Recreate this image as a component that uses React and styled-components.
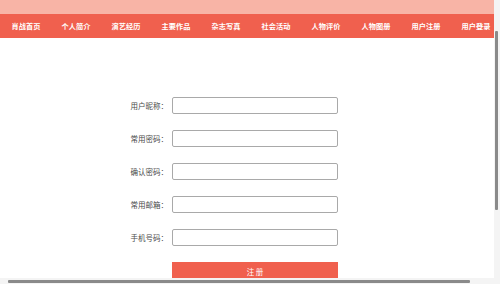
import React from "react";
import styled, { createGlobalStyle } from "styled-components";

const GlobalStyle = createGlobalStyle`
  html, body {
    margin: 0;
    padding: 0;
    background: #ffffff;
    overflow: hidden;
  }
  body {
    font-family: "Noto Sans CJK SC", "Noto Sans", sans-serif;
  }
`;

const navItems = [
  "肖战首页",
  "个人简介",
  "演艺经历",
  "主要作品",
  "杂志写真",
  "社会活动",
  "人物评价",
  "人物图册",
  "用户注册",
  "用户登录",
];

const fields = ["用户昵称", "常用密码", "确认密码", "常用邮箱", "手机号码"];

// Page

const Page = styled.div`
  width: 500px;
  height: 284px;
  position: relative;
  overflow: hidden;
`;

const TopBand = styled.div`
  height: 14px;
  background: #f8b4a6;
`;

// Nav

const Nav = styled.nav`
  display: flex;
  height: 24px;
  background: #f0604e;
`;

const NavItem = styled.a`
  box-sizing: border-box;
  flex: 0 0 50px;
  min-width: 0;
  display: flex;
  align-items: center;
  justify-content: center;
  padding-left: 2px;
  color: #ffffff;
  font-size: 7.2px;
  font-weight: 700;
  white-space: nowrap;
  text-decoration: none;
`;

// Form

const Form = styled.form`
  display: grid;
  grid-template-columns: 168px 166px;
  column-gap: 4px;
  row-gap: 16px;
  padding: 59px 0 0 0;
  align-items: center;
`;

const Label = styled.label`
  text-align: right;
  font-size: 7.5px;
  color: #4a4a4a;
`;

const Input = styled.input`
  box-sizing: border-box;
  height: 17px;
  width: 166px;
  margin: 0;
  border: 1px solid #a9a9a9;
  border-radius: 2px;
  background: #ffffff;
  outline: none;
`;

const Submit = styled.button`
  grid-column: 2;
  height: 18px;
  width: 166px;
  border: none;
  background: #f0604e;
  color: #ffffff;
  font-family: inherit;
  font-size: 7.5px;
  padding: 0;
`;

// Scrollbars (drawn over the page)

const VTrack = styled.div`
  position: absolute;
  top: 0;
  right: 0;
  width: 6px;
  height: 278px;
  background: #f4f4f4;
`;

const VThumb = styled.div`
  position: absolute;
  top: 31px;
  right: 2px;
  width: 3px;
  height: 179px;
  background: #8a8a8a;
  border-radius: 1px;
`;

const HTrack = styled.div`
  position: absolute;
  left: 0;
  bottom: 0;
  width: 500px;
  height: 6px;
  background: #f4f4f4;
`;

const HThumb = styled.div`
  position: absolute;
  left: 8px;
  bottom: 1px;
  width: 462px;
  height: 3px;
  background: #8a8a8a;
  border-radius: 1px;
`;

export default function App() {
  return (
    <>
      <GlobalStyle />
      <Page>
        <TopBand />
        <Nav>
          {navItems.map((item) => (
            <NavItem key={item} href="#">
              {item}
            </NavItem>
          ))}
        </Nav>
        <Form onSubmit={(e) => e.preventDefault()}>
          {fields.map((f) => (
            <React.Fragment key={f}>
              <Label>{f}：</Label>
              <Input type="text" />
            </React.Fragment>
          ))}
          <Submit type="submit">注 册</Submit>
        </Form>
        <VTrack />
        <VThumb />
        <HTrack />
        <HThumb />
      </Page>
    </>
  );
}
